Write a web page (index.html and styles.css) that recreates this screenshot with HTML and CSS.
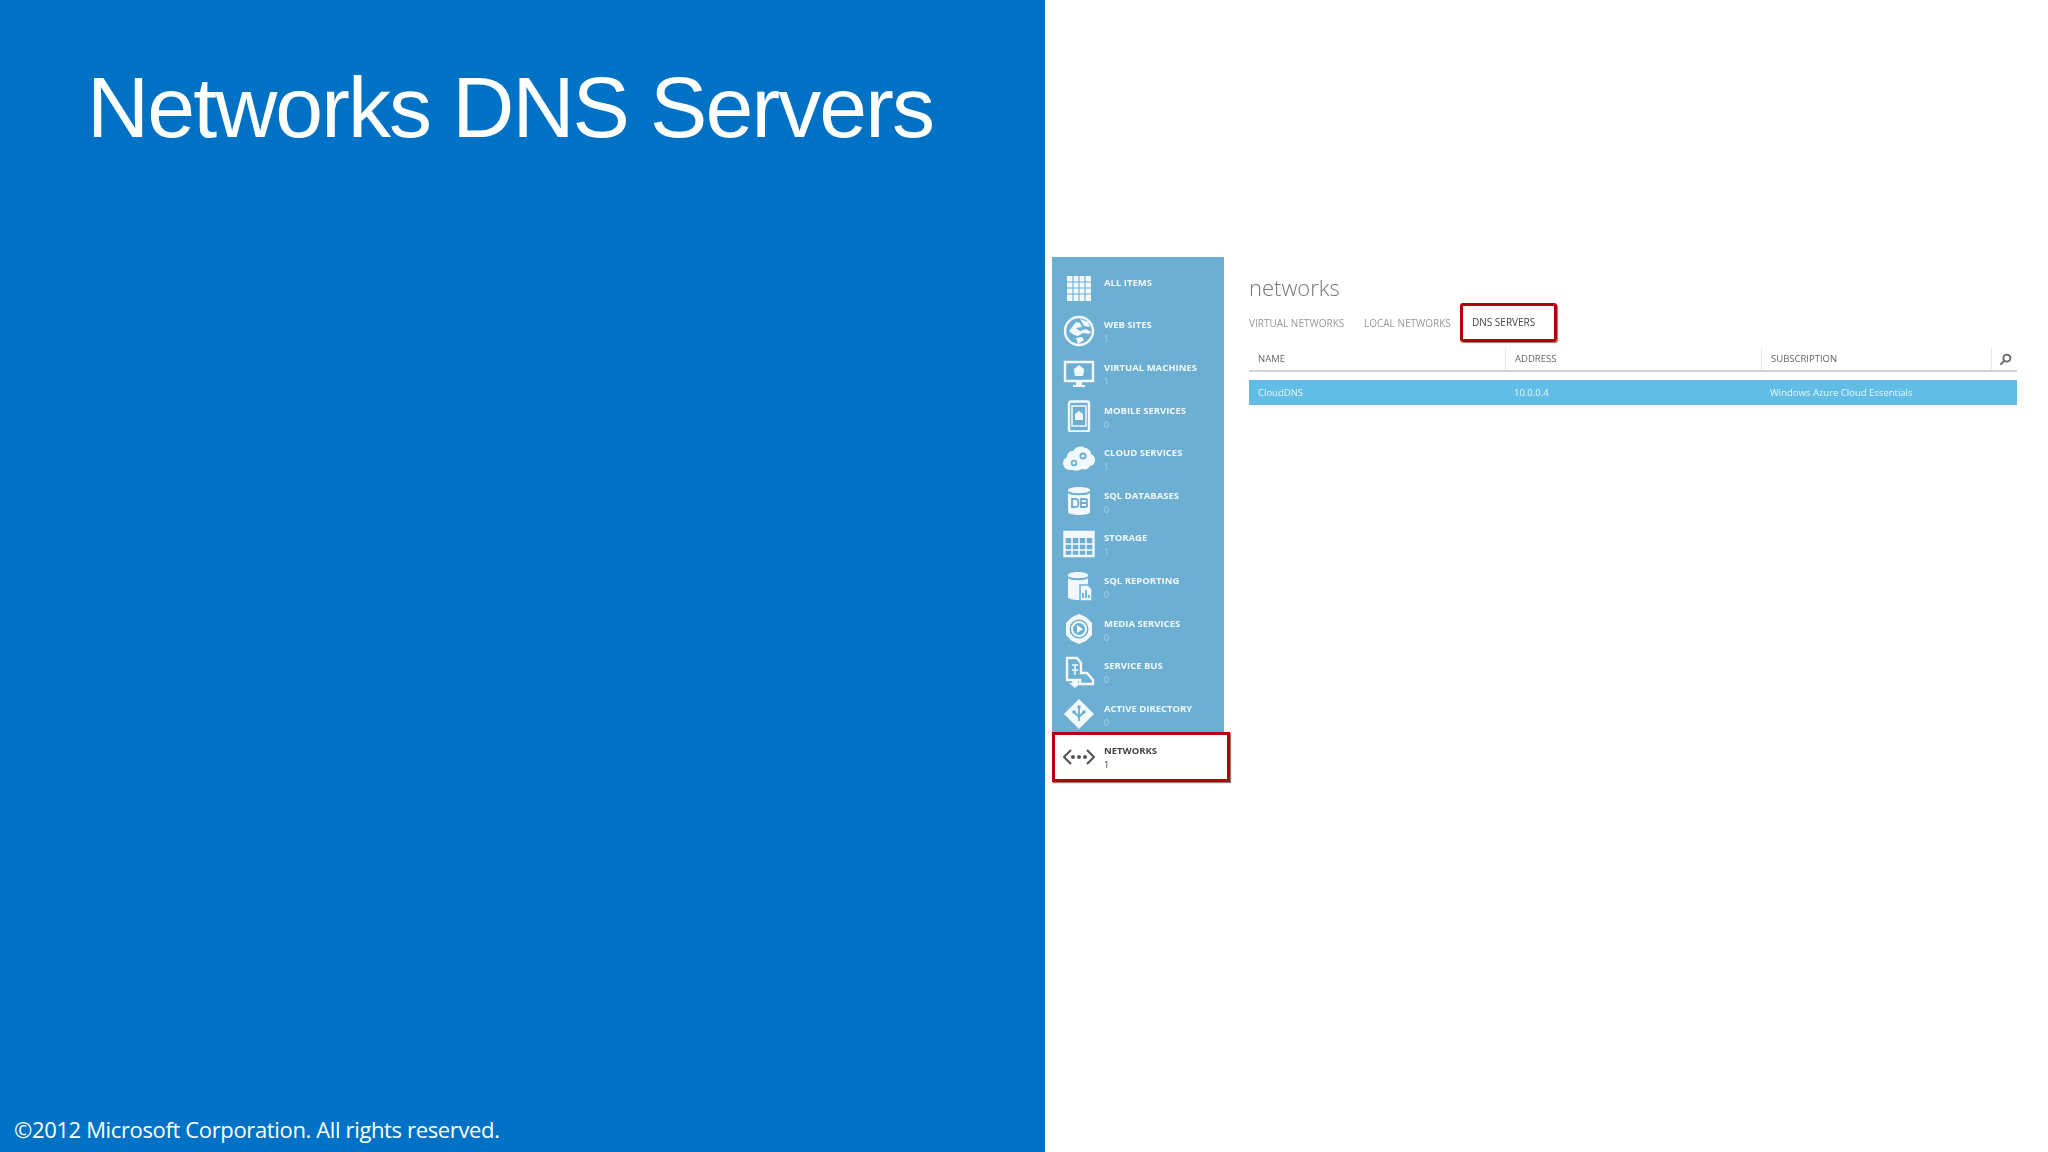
FILE: index.html
```html
<!DOCTYPE html>
<html lang="en">
<head>
<meta charset="utf-8">
<title>Networks DNS Servers</title>
<link rel="stylesheet" href="styles.css">
</head>
<body>
<main class="slide">
  <section class="panel">
    <h1 class="title">Networks DNS Servers</h1>
    <p class="legal">©2012 Microsoft Corporation. All rights reserved.</p>
  </section>
  <section class="stage">
    <div class="console">
      <nav class="sidebar">
        <ul class="nav-list">
          <li class="nav-row">
            <svg class="nav-icon" viewBox="0 0 32 32"><path class="fill" d="M4 4h24v25H4z"/><path class="cut grid-cut" d="M10 3v27M16 3v27M22 3v27M3 10h26M3 16h26M3 22h26"/></svg>
            <div class="nav-text"><span class="nav-label">ALL ITEMS</span><span class="nav-count"></span></div>
          </li>
          <li class="nav-row">
            <svg class="nav-icon" viewBox="0 0 32 32"><circle class="line" cx="16" cy="16" r="14"/><path class="fill" d="M6 16l7-9 4 1 2 4-6 1 4 3 6-2 5 3-2 2-6-1-5 3-4-1zM17 4l8 3 2 5-6-1zM13 23l6-1 2 3-6 4z"/></svg>
            <div class="nav-text"><span class="nav-label">WEB SITES</span><span class="nav-count">1</span></div>
          </li>
          <li class="nav-row">
            <svg class="nav-icon" viewBox="0 0 32 32"><path class="line" d="M2 5h28v19H2z"/><path class="fill" d="M10 28h12v2H10zM13 24h6v4h-6zM16 8l5 4v2l-1 5h-8l-1-5v-2z"/></svg>
            <div class="nav-text"><span class="nav-label">VIRTUAL MACHINES</span><span class="nav-count">1</span></div>
          </li>
          <li class="nav-row">
            <svg class="nav-icon" viewBox="0 0 32 32"><rect class="line" x="6" y="1.500" width="20" height="30" rx="2"/><path class="line thin" d="M9 6h14v20H9z"/><path class="fill" d="M16 11l4 3v6h-8v-6z"/></svg>
            <div class="nav-text"><span class="nav-label">MOBILE SERVICES</span><span class="nav-count">0</span></div>
          </li>
          <li class="nav-row">
            <svg class="nav-icon" viewBox="0 0 32 32"><path class="fill" d="M7 27c-4 0-7-3-7-7 0-3 2-5 4-6 0-4 3-6 6-6 2-4 8-6 12-3 3 0 6 3 6 6 3 1 4 4 4 6 0 3-2 6-5 6-1 3-5 4-8 3-3 2-7 2-9 1z"/><circle class="hole" cx="11" cy="20" r="3.200"/><circle class="hole" cx="20" cy="13" r="3.600"/><circle class="fill" cx="11" cy="20" r="1.400"/><circle class="fill" cx="20" cy="13" r="1.600"/></svg>
            <div class="nav-text"><span class="nav-label">CLOUD SERVICES</span><span class="nav-count">1</span></div>
          </li>
          <li class="nav-row">
            <svg class="nav-icon" viewBox="0 0 32 32"><path class="fill" d="M5 5c0-4 22-4 22 0v22c0 4-22 4-22 0z"/><path class="cut thin" d="M5 7c3 3 19 3 22 0M9 14h3.500c4 0 4 8 0 8H9zM18 14h4c3 0 3 4 0 4h-4zM18 18h4c3 0 3 4 0 4h-4z"/></svg>
            <div class="nav-text"><span class="nav-label">SQL DATABASES</span><span class="nav-count">0</span></div>
          </li>
          <li class="nav-row">
            <svg class="nav-icon" viewBox="0 0 32 32"><path class="line" d="M1.500 4h29v24h-29z"/><path class="fill" d="M1.500 4h29v6h-29z"/><path class="line thin" d="M1.500 16h29M1.500 22h29M9 10v18M16 10v18M23 10v18"/></svg>
            <div class="nav-text"><span class="nav-label">STORAGE</span><span class="nav-count">1</span></div>
          </li>
          <li class="nav-row">
            <svg class="nav-icon" viewBox="0 0 32 32"><path class="fill" d="M5 5c0-4 20-4 20 0v22c0 4-20 4-20 0z"/><path class="cut thin" d="M5 7c3 3 17 3 20 0"/><path class="fill stroke-bg" d="M17 15h8l4 4v12H17z"/><path class="cut thin" d="M20 28v-5M23 28v-8M26 28v-3"/></svg>
            <div class="nav-text"><span class="nav-label">SQL REPORTING</span><span class="nav-count">0</span></div>
          </li>
          <li class="nav-row">
            <svg class="nav-icon" viewBox="0 0 32 32"><path class="fill" d="M16 1l7 3 6 6v12l-6 6-7 3-7-3-6-6V10l6-6z"/><circle class="hole" cx="16" cy="16" r="9.500"/><circle class="ring" cx="16" cy="16" r="7"/><path class="fill" d="M14 12l6 4-6 4z"/></svg>
            <div class="nav-text"><span class="nav-label">MEDIA SERVICES</span><span class="nav-count">0</span></div>
          </li>
          <li class="nav-row">
            <svg class="nav-icon" viewBox="0 0 32 32"><path class="line" d="M4 2h10l4 5v10l6 0 6 7v4H17v-4H4z"/><path class="line thin" d="M9 9h6M9 14h6M12 9v10"/><path class="fill" d="M9 24h6v3h3l-6 5-6-5h3z"/></svg>
            <div class="nav-text"><span class="nav-label">SERVICE BUS</span><span class="nav-count">0</span></div>
          </li>
          <li class="nav-row">
            <svg class="nav-icon" viewBox="0 0 32 32"><path class="fill" d="M16 1l15 15-15 15L1 16z"/><path class="cut thin" d="M16 9v14M11 14l5 5 5-5"/><circle class="hole" cx="16" cy="9" r="1.800"/><circle class="hole" cx="11" cy="14" r="1.800"/><circle class="hole" cx="21" cy="14" r="1.800"/></svg>
            <div class="nav-text"><span class="nav-label">ACTIVE DIRECTORY</span><span class="nav-count">0</span></div>
          </li>
        </ul>
        <div class="nav-row nav-active">
          <svg class="nav-icon" viewBox="0 0 32 32"><path class="dark-line" d="M8 9l-7 7 7 7M24 9l7 7-7 7"/><circle class="dark-dot" cx="10" cy="16" r="2"/><circle class="dark-dot" cx="16" cy="16" r="2"/><circle class="dark-dot" cx="22" cy="16" r="2"/></svg>
          <div class="nav-text"><span class="nav-label">NETWORKS</span><span class="nav-count">1</span></div>
        </div>
      </nav>
      <div class="content">
        <h2 class="heading">networks</h2>
        <div class="tabs">
          <span class="tab tab-first">VIRTUAL NETWORKS</span>
          <span class="tab tab-second">LOCAL NETWORKS</span>
          <span class="tab tab-current">DNS SERVERS</span>
        </div>
        <div class="grid grid-head">
          <span class="cell">NAME</span>
          <span class="cell">ADDRESS</span>
          <span class="cell">SUBSCRIPTION</span>
          <span class="cell cell-search">
            <svg class="search" viewBox="0 0 14 14"><circle cx="8.500" cy="5.500" r="3.800"/><path d="M5.800 8.200L1.500 12.500"/></svg>
          </span>
        </div>
        <div class="grid grid-row">
          <span class="cell">CloudDNS</span>
          <span class="cell">10.0.0.4</span>
          <span class="cell">Windows Azure Cloud Essentials</span>
        </div>
      </div>
    </div>
  </section>
</main>
</body>
</html>
```
FILE: styles.css
```css
* { box-sizing: border-box; }
html, body { margin: 0; padding: 0; }
body { width: 2048px; height: 1152px; overflow: hidden; background: #fff; font-family: "Liberation Sans", Arial, sans-serif; }
ul { list-style: none; margin: 0; padding: 0; }
.slide { display: flex; width: 2048px; height: 1152px; }
.panel { width: 1045px; height: 1152px; flex: none; background: #0072c6; color: #fff; display: flex; flex-direction: column; }
.title { margin: 0; padding: 59px 0 0 87px; font-size: 86px; line-height: 96px; font-weight: 400; letter-spacing: -1.9px; white-space: nowrap; }
.legal { margin: auto 0 0; padding: 0 0 8px 14px; font-family: "Open Sans", sans-serif; font-size: 22px; line-height: 30px; letter-spacing: -0.36px; white-space: nowrap; }
.stage { flex: 1; padding: 257px 0 0 7px; }
.console { display: flex; filter: blur(0.6px); }
.sidebar { width: 172px; flex: none; position: relative; margin-right: 25px; }
.nav-list { background: #6cafd2; padding-top: 10px; }
.nav-row { display: flex; align-items: center; height: 42.6px; padding-left: 11px; color: #f0f9fc; }
.nav-icon { width: 32px; height: 32px; flex: none; margin-right: 9px; }
.nav-text { display: flex; flex-direction: column; padding-top: 3px; font-family: "Open Sans", sans-serif; }
.nav-label { font-size: 9.5px; line-height: 14px; height: 14px; font-weight: 700; white-space: nowrap; }
.nav-count { font-size: 9px; line-height: 14px; height: 14px; color: #a6d3e6; }
.fill { fill: #f2f9fc; }
.line { fill: none; stroke: #f2f9fc; stroke-width: 2.4; }
.line.thin { stroke-width: 1.500; }
.cut { fill: none; stroke: #6cafd2; stroke-width: 1.500; }
.cut.grid-cut { stroke-width: 1.100; }
.cut.thin { stroke-width: 1.800; }
.hole { fill: #6cafd2; }
.ring { fill: none; stroke: #f2f9fc; stroke-width: 2; }
.stroke-bg { stroke: #6cafd2; stroke-width: 1.500; }
.nav-active { position: relative; z-index: 1; width: 178px; height: 50px; margin-top: -4px; padding-left: 8px; background: #fff; border: 3px solid #b5000c; box-shadow: 1px 1px 1px rgba(60, 40, 40, 0.6); color: #444; }
.nav-active .nav-count { color: #444; }
.dark-line { fill: none; stroke: #555; stroke-width: 2.2; }
.dark-dot { fill: #555; }
.content { width: 768px; padding-top: 16px; color: #777; font-family: "Open Sans", sans-serif; }
.heading { margin: 0; font-size: 22px; line-height: 28px; font-weight: 300; color: #777; }
.tabs { display: flex; align-items: center; height: 39px; margin-top: 2px; font-size: 10px; color: #999; }
.tab { white-space: nowrap; }
.tab-first { width: 115px; }
.tab-second { width: 96px; }
.tab-current { width: 97px; height: 39px; line-height: 33px; padding-left: 9px; color: #444; border: 3px solid #b5000c; border-radius: 3px; box-shadow: 1px 1px 1px rgba(60, 40, 40, 0.6); }
.grid { display: grid; grid-template-columns: 256px 256px 230px 26px; align-items: center; }
.grid-head { height: 24px; margin-top: 6px; border-bottom: 2px solid #d6d3ce; font-size: 9.5px; color: #666; }
.grid-head .cell { height: 22px; line-height: 22px; border-left: 1px solid #e8e8e8; }
.grid-head .cell:first-child { border-left: 0; }
.cell { padding-left: 9px; white-space: nowrap; }
.cell-search { display: flex; align-items: center; padding-left: 7px; }
.search { width: 13px; height: 13px; fill: none; stroke: #666; stroke-width: 2; }
.grid-row { height: 25px; margin-top: 8px; background: #62bde6; color: #e8f7fd; font-size: 9.5px; }
```
